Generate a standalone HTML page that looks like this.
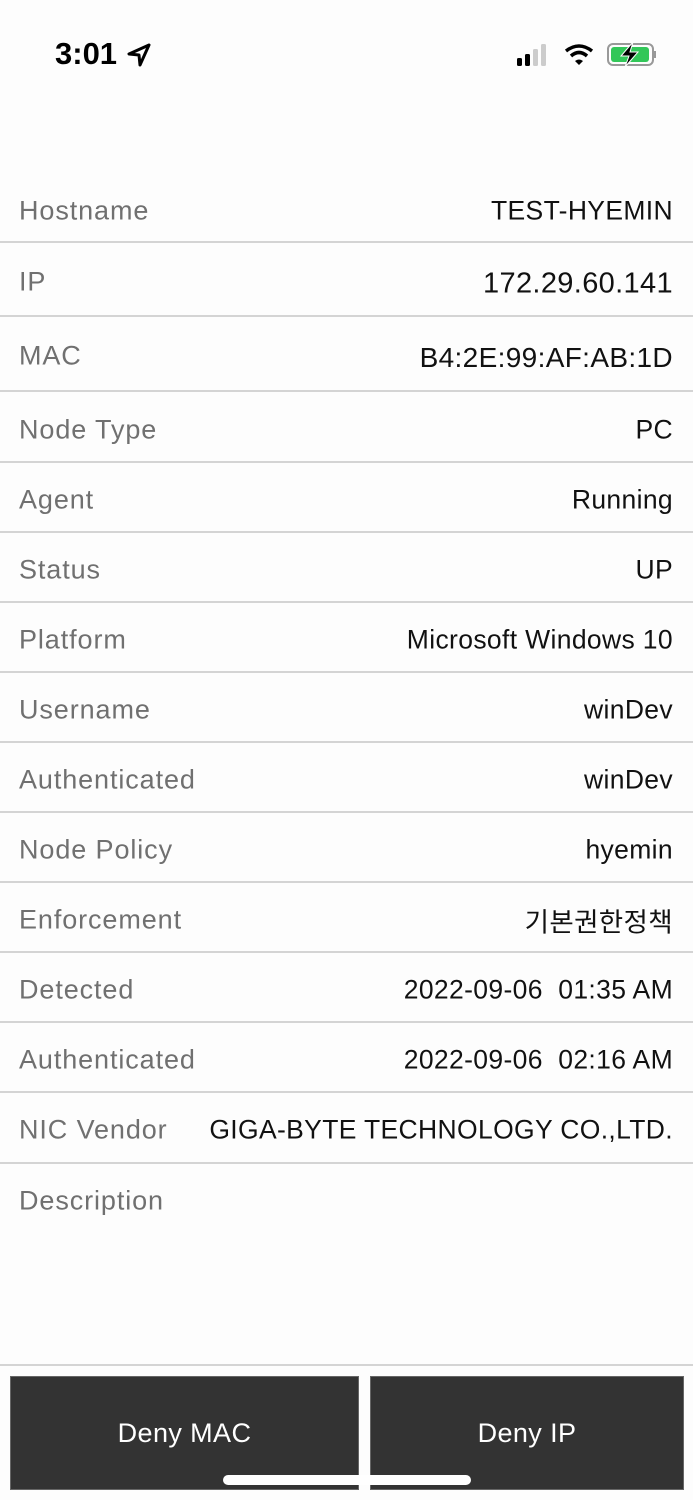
<!DOCTYPE html>
<html><head><meta charset="utf-8"><style>
html,body{margin:0;padding:0;background:#fdfdfd;}
body{width:693px;height:1500px;position:relative;overflow:hidden;font-family:"Liberation Sans","Noto Sans CJK KR",sans-serif;}
.row{position:absolute;left:0;width:693px;border-bottom:2px solid #d4d4d4;box-sizing:border-box;}
.l{position:absolute;left:19px;color:#707070;font-size:27px;letter-spacing:0.9px;transform:translateY(-50%);margin-top:2px;}
.v{position:absolute;right:20px;color:#111;font-size:26.5px;letter-spacing:0.35px;transform:translateY(-50%);white-space:nowrap;margin-top:2px;}
.btn{position:absolute;top:1376px;height:114px;background:#333;color:#fff;font-size:27px;letter-spacing:0.4px;display:flex;align-items:center;justify-content:center;border:1px solid #666;box-sizing:border-box;}
</style></head><body>
<div style="position:absolute;left:55px;top:36px;font-size:31px;font-weight:bold;color:#000;">3:01</div>
<svg style="position:absolute;left:126px;top:42px" width="26" height="26" viewBox="0 0 26 26"><path d="M23 3 L3 12 L13 13 L14 23 Z" fill="none" stroke="#000" stroke-width="3" stroke-linejoin="round"/></svg>
<svg style="position:absolute;left:516px;top:42px" width="140" height="26" viewBox="0 0 140 26">
<rect x="1" y="16" width="5" height="8" rx="1.5" fill="#000"/><rect x="9" y="12" width="5" height="12" rx="1.5" fill="#000"/><rect x="17" y="7" width="5" height="17" rx="1.5" fill="#ccc"/><rect x="25" y="2" width="5" height="22" rx="1.5" fill="#ccc"/>
<path d="M50 9 Q63 -1 76 9" stroke="#000" stroke-width="3.5" fill="none"/><path d="M55 14 Q63 7 71 14" stroke="#000" stroke-width="3.5" fill="none"/><path d="M59 19 L63 23 L67 19 Q63 16 59 19Z" fill="#000"/>
<rect x="92" y="2" width="45" height="21" rx="5" fill="none" stroke="#999" stroke-width="2"/><rect x="95" y="5" width="38" height="15" rx="3" fill="#32c759"/><rect x="138" y="9" width="2" height="7" fill="#999"/>
<path d="M117 0 L105 14 L113 14 L109 25 L122 10 L114 10 Z" fill="#000" stroke="#fdfdfd" stroke-width="1"/>
</svg>

<div class="row" style="top:175px;height:68px"><span class="l" style="top:34px">Hostname</span><span class="v" style="top:34px">TEST-HYEMIN</span></div>
<div class="row" style="top:243px;height:74px"><span class="l" style="top:37px">IP</span><span class="v" style="top:39px;font-size:29px">172.29.60.141</span></div>
<div class="row" style="top:317px;height:75px"><span class="l" style="top:37px">MAC</span><span class="v" style="top:39px;font-size:28px">B4:2E:99:AF:AB:1D</span></div>
<div class="row" style="top:392px;height:71px"><span class="l" style="top:36px">Node Type</span><span class="v" style="top:36px">PC</span></div>
<div class="row" style="top:463px;height:70px"><span class="l" style="top:35px">Agent</span><span class="v" style="top:35px">Running</span></div>
<div class="row" style="top:533px;height:70px"><span class="l" style="top:35px">Status</span><span class="v" style="top:35px">UP</span></div>
<div class="row" style="top:603px;height:70px"><span class="l" style="top:35px">Platform</span><span class="v" style="top:35px">Microsoft Windows 10</span></div>
<div class="row" style="top:673px;height:70px"><span class="l" style="top:35px">Username</span><span class="v" style="top:35px">winDev</span></div>
<div class="row" style="top:743px;height:70px"><span class="l" style="top:35px">Authenticated</span><span class="v" style="top:35px">winDev</span></div>
<div class="row" style="top:813px;height:70px"><span class="l" style="top:35px">Node Policy</span><span class="v" style="top:35px">hyemin</span></div>
<div class="row" style="top:883px;height:70px"><span class="l" style="top:35px">Enforcement</span><span class="v" style="top:35px">기본권한정책</span></div>
<div class="row" style="top:953px;height:70px"><span class="l" style="top:35px">Detected</span><span class="v" style="top:35px">2022-09-06&nbsp; 01:35 AM</span></div>
<div class="row" style="top:1023px;height:70px"><span class="l" style="top:35px">Authenticated</span><span class="v" style="top:35px">2022-09-06&nbsp; 02:16 AM</span></div>
<div class="row" style="top:1093px;height:71px"><span class="l" style="top:35px">NIC Vendor</span><span class="v" style="top:35px">GIGA-BYTE TECHNOLOGY CO.,LTD.</span></div>
<div class="row" style="top:1164px;height:202px"><span class="l" style="top:35px">Description</span></div>

<div class="btn" style="left:10px;width:349px">Deny MAC</div>
<div class="btn" style="left:370px;width:314px">Deny IP</div>
<div style="position:absolute;left:223px;top:1475px;width:248px;height:10px;border-radius:5px;background:#fff;"></div>
</body></html>
